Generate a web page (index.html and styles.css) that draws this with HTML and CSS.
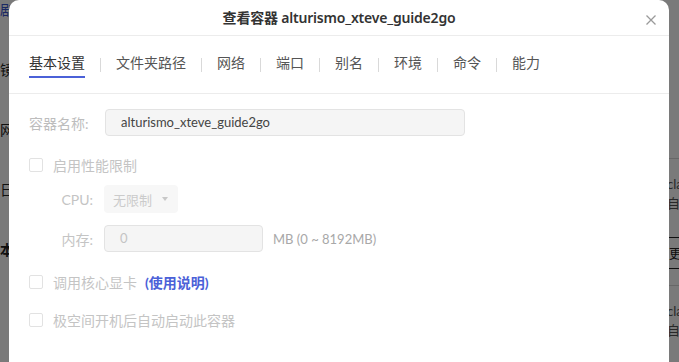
FILE: index.html
```html
<!DOCTYPE html>
<html lang="zh-CN">
<head>
    <meta charset="UTF-8">
    <meta name="viewport" content="width=device-width, initial-scale=1.0">
    <title>查看容器</title>
    <link rel="stylesheet" href="styles.css">
</head>
<body>
    <!-- 背景页面（被遮罩覆盖） -->
    <div class="page">
        <div class="side-nav">
            <div class="side-item side-item-active">剧</div>
            <div class="side-item">镜</div>
            <div class="side-item">网</div>
            <div class="side-item">日</div>
            <div class="side-item side-item-bold">本</div>
        </div>
        <div class="list-col">
            <div class="list-row">
                <div class="list-name">cla</div>
                <div class="list-sub">自</div>
                <div class="list-btn">更</div>
            </div>
            <div class="list-row">
                <div class="list-name">cla</div>
                <div class="list-sub">自</div>
            </div>
        </div>
    </div>
    <div class="mask"></div>

    <!-- 查看容器弹窗 -->
    <div class="dialog">
        <div class="dialog-header">
            <span class="dialog-title">查看容器 alturismo_xteve_guide2go</span>
            <span class="dialog-close">
                <svg width="10" height="10" viewBox="0 0 10 10">
                    <path d="M0.5 0.5 L9.5 9.5 M9.5 0.5 L0.5 9.5" stroke="#9a9a9a" stroke-width="1.3" fill="none"/>
                </svg>
            </span>
        </div>

        <div class="tabs">
            <span class="tab tab-active">基本设置</span>
            <span class="tab-sep"></span>
            <span class="tab">文件夹路径</span>
            <span class="tab-sep"></span>
            <span class="tab">网络</span>
            <span class="tab-sep"></span>
            <span class="tab">端口</span>
            <span class="tab-sep"></span>
            <span class="tab">别名</span>
            <span class="tab-sep"></span>
            <span class="tab">环境</span>
            <span class="tab-sep"></span>
            <span class="tab">命令</span>
            <span class="tab-sep"></span>
            <span class="tab">能力</span>
        </div>

        <div class="dialog-body">
            <div class="form-row row-name">
                <label class="form-label">容器名称:</label>
                <div class="input input-name">alturismo_xteve_guide2go</div>
            </div>

            <div class="check-row row-limit">
                <span class="checkbox"></span>
                <span class="check-text">启用性能限制</span>
            </div>

            <div class="form-row row-cpu">
                <label class="sub-label">CPU:</label>
                <div class="select">
                    <span>无限制</span>
                    <span class="select-arrow"></span>
                </div>
            </div>

            <div class="form-row row-mem">
                <label class="sub-label">内存:</label>
                <div class="input input-mem">0</div>
                <span class="unit">MB (0 ~ 8192MB)</span>
            </div>

            <div class="check-row row-gpu">
                <span class="checkbox"></span>
                <span class="check-text">调用核心显卡</span>
                <span class="help-link">(使用说明)</span>
            </div>

            <div class="check-row row-boot">
                <span class="checkbox"></span>
                <span class="check-text">极空间开机后自动启动此容器</span>
            </div>
        </div>
    </div>
</body>
</html>
```

FILE: styles.css
```css
body {
    margin: 0;
    width: 679px;
    height: 362px;
    overflow: hidden;
    position: relative;
    font-family: 'Lato', 'Noto Sans CJK SC', sans-serif;
    font-size: 14px;
    color: #333;
    background: #fff;
}

/* 背景页面 */
.page {
    display: flex;
    justify-content: space-between;
    height: 100%;
}
.side-nav {
    display: flex;
    flex-direction: column;
    margin-top: -20px;
}
.side-item {
    height: 60px;
    line-height: 60px;
    font-size: 14px;
    color: #222;
}
.side-item-active {
    color: #3a55d0;
}
.side-item-bold {
    font-weight: 700;
}
.list-col {
    width: 12px;
    padding-top: 158px;
    overflow: hidden;
}
.list-row {
    border-top: 1px solid #d8d8d8;
    padding-top: 16px;
    height: 110px;
    font-size: 13px;
    color: #555;
}
.list-name {
    line-height: 18px;
    white-space: nowrap;
}
.list-sub {
    line-height: 20px;
}
.list-btn {
    margin-top: 24px;
    width: 40px;
    height: 30px;
    line-height: 30px;
    border: 1px solid #222;
    color: #222;
    text-indent: 1px;
}
.mask {
    position: absolute;
    inset: 0;
    background: rgba(0, 0, 0, 0.52);
}

/* 弹窗 */
.dialog {
    position: absolute;
    left: 9px;
    top: 0;
    width: 660px;
    height: 380px;
    background: #fff;
    border-radius: 10px 10px 0 0;
}
.dialog-header {
    position: relative;
    height: 35px;
    border-bottom: 1px solid #ececec;
    display: flex;
    align-items: center;
    justify-content: center;
}
.dialog-title {
    font-family: 'Noto Sans', 'Noto Sans CJK SC', sans-serif;
    font-size: 14px;
    font-weight: 600;
    letter-spacing: -0.2px;
    color: #333;
    margin-top: -1px;
}
.dialog-close {
    position: absolute;
    right: 13px;
    top: 15px;
    width: 10px;
    height: 10px;
    display: flex;
}

.tabs {
    display: flex;
    align-items: center;
    height: 57px;
    padding: 0 20px;
    border-bottom: 1px solid #ececec;
}
.tab {
    font-size: 14px;
    line-height: 20px;
    padding-bottom: 3px;
    border-bottom: 2px solid transparent;
    margin-top: 2px;
    color: #555;
}
.tab-active {
    color: #333;
    border-bottom-color: #4b61d8;
}
.tab-sep {
    width: 1px;
    height: 14px;
    background: #d9d9d9;
    margin: 0 15px;
}

.dialog-body {
    padding: 15px 20px;
    display: flex;
    flex-direction: column;
}
.form-row {
    display: flex;
    align-items: center;
}
.form-label {
    width: 76px;
    color: #bdbdbd;
}
.sub-label {
    width: 64px;
    margin-right: 11px;
    text-align: right;
    color: #c4c4c4;
}
.input {
    height: 25px;
    line-height: 25px;
    border: 1px solid #e3e3e3;
    border-radius: 4px;
    background: #f5f5f5;
    padding: 0 15px;
    font-size: 13px;
}
.input-name {
    width: 328px;
    color: #444;
}
.input-mem {
    width: 127px;
    color: #c4c4c4;
}
.unit {
    margin-left: 10px;
    font-size: 13px;
    color: #a8a8a8;
}
.select {
    width: 74px;
    height: 28px;
    border-radius: 4px;
    background: #f7f7f7;
    display: flex;
    align-items: center;
    justify-content: space-between;
    padding: 0 10px 0 9px;
    box-sizing: border-box;
    font-size: 13px;
    color: #cbcbcb;
}
.select-arrow {
    width: 0;
    height: 0;
    border-left: 3px solid transparent;
    border-right: 3px solid transparent;
    border-top: 4px solid #c8c8c8;
}

.check-row {
    display: flex;
    align-items: center;
    height: 20px;
}
.checkbox {
    width: 12px;
    height: 12px;
    border: 1px solid #e2e2e2;
    border-radius: 2px;
    margin-right: 10px;
}
.check-text {
    color: #c4c4c4;
}
.help-link {
    margin-left: 8px;
    color: #4b61d8;
    font-weight: 700;
}

.row-name { height: 27px; }
.row-limit { margin-top: 19px; }
.row-cpu { margin-top: 10px; height: 28px; }
.row-mem { margin-top: 12px; height: 27px; }
.row-gpu { margin-top: 20px; }
.row-boot { margin-top: 18px; }
```
